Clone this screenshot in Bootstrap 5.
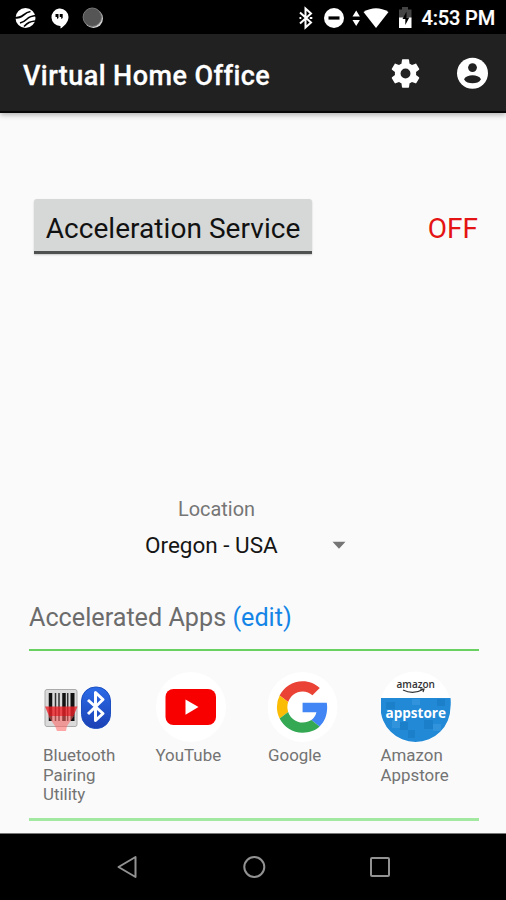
<!DOCTYPE html>
<html lang="en">
<head>
<meta charset="utf-8">
<meta name="viewport" content="width=device-width, initial-scale=1">
<title>Virtual Home Office</title>
<link href="https://cdn.jsdelivr.net/npm/bootstrap@5.3.0/dist/css/bootstrap.min.css" rel="stylesheet">
<style>
body{font-family:Roboto,"Liberation Sans",sans-serif;background:#fafafa;height:900px;overflow:hidden}
svg{display:block;flex:none}
.status-bar{height:34px;background:#000;padding:2px 11px 0 14px}
.status-time{font-size:20px;font-weight:500;line-height:34px;letter-spacing:-.15px;-webkit-text-stroke:.2px #fff}
.app-bar{height:79px;background:#212121;padding:0 17px 0 23px;border-bottom:2px solid #080808;box-shadow:0 2px 5px rgba(0,0,0,.28);z-index:1}
.app-title{font-size:27px;font-weight:500;line-height:32px;padding-top:7px;letter-spacing:.43px;-webkit-text-stroke:.3px #fff}
.service-row{margin-top:86px;padding:0 27px 0 34px}
.service-btn{width:278px;height:55px;background:#d6d8d7;color:#111;font-size:28px;line-height:46px;border:0;border-bottom:3px solid #4f5150;border-radius:3px 3px 0 0;padding:7px 0 0;box-shadow:0 1px 2px rgba(0,0,0,.2);letter-spacing:.05px}
.state{font-size:28px;color:#e51414;line-height:56px;margin-top:2px;margin-right:1px}
.location{margin-top:241px;color:#757575;font-size:19.900px;line-height:24px;padding-left:178px}
.picker{margin-top:9px;padding:0 160px 0 145px;font-size:22.5px;line-height:28px;color:#151515}
.apps{margin:0 27px 0 29px}
.apps-title{margin-top:42px;font-size:25.2px;line-height:34px;color:#6c6c6c;padding-bottom:14px;border-bottom:2px solid #68d162}
.apps-title a{color:#1485e6}
.app-grid{height:166.500px;padding-top:20px}
.app-item{padding-left:14px}
.app-label{font-size:16.900px;line-height:19.7px;color:#737373;margin-top:3px}
.end-line{height:3px;background:#a3e8a0}
.nav-bar{height:67px;background:#000;border-top:1px solid #777;padding:0 115px 0 116px}
</style>
</head>
<body class="d-flex flex-column">
<header class="status-bar d-flex align-items-center text-white">
  <svg width="92" height="24" viewBox="14 5.500 92 24">
    <circle cx="25.500" cy="17.500" r="10" fill="#fff"/>
    <path d="M14 17.500q6 0 9.500-3t7-3.500M20 22.500q4-1 7-4t9-3.500M24 26q3-3 5-4t6-1.500" stroke="#000" stroke-width="1.700" fill="none"/>
    <path d="M60 8a9 9 0 0 1 8.500 8.500c0 5-4.500 9.500-8 11.500V25.500H60a8.800 8.800 0 0 1-1-17.500z" fill="#fff"/>
    <path d="M55.500 13.500h3v4l-1.500 1v-2h-1.500zm4.200 0h3v4l-1.500 1v-2h-1.500z" fill="#000"/>
    <circle cx="93.500" cy="18" r="9.500" fill="#d2d2d2"/><circle cx="92.300" cy="16.700" r="9.200" fill="#555" stroke="#777" stroke-width="1"/>
  </svg>
  <svg class="ms-auto" width="116" height="26" viewBox="297 4.500 116 26">
    <path d="M300 12l11 10-5.500 5V8l5.500 5-11 10" fill="none" stroke="#fff" stroke-width="2"/>
    <path d="M299.500 17.500h1.800m8.500 0h2.500" stroke="#fff" stroke-width="2"/>
    <circle cx="334" cy="17.500" r="10" fill="#fff"/><rect x="328.500" y="15.900" width="11" height="3.200" fill="#000"/>
    <path d="M352.500 16l3.700-6 3.700 6zm0 3.500h7.400l-3.700 6z" fill="#fff"/>
    <path d="M363.500 11.500q12.500-7.500 25 0l-12.500 16z" fill="#fff"/>
    <path d="M399 9h3V6.500h6V9h3.500v9H399z" fill="#444"/><path d="M399 17h12.500v10.500H399z" fill="#fff"/>
    <path d="M406.500 11l-4 7.500h2.800v6l4-7.500h-2.800z" fill="#000"/>
  </svg>
  <span class="status-time ms-2">4:53 PM</span>
</header>
<nav class="app-bar d-flex align-items-center text-white">
  <span class="app-title">Virtual Home Office</span>
  <svg class="ms-auto" width="34" height="34" viewBox="0.350 -0.350 24 24" fill="#fff"><path d="M19.430 12.980c.04-.32.07-.64.07-.98s-.03-.66-.07-.98l2.110-1.650c.19-.15.24-.42.12-.64l-2-3.460c-.12-.22-.39-.3-.61-.22l-2.490 1c-.52-.4-1.080-.73-1.690-.98l-.38-2.650C14.460 2.180 14.250 2 14 2h-4c-.25 0-.46.18-.49.42l-.38 2.650c-.61.25-1.170.59-1.690.98l-2.490-1c-.23-.09-.49 0-.61.22l-2 3.460c-.13.22-.07.49.12.64l2.110 1.650c-.04.32-.07.65-.07.98s.03.66.07.98l-2.110 1.650c-.19.15-.24.42-.12.64l2 3.460c.12.22.39.3.61.22l2.490-1c.52.4 1.080.73 1.690.98l.38 2.650c.03.24.24.42.49.42h4c.25 0 .46-.18.49-.42l.38-2.650c.61-.25 1.170-.59 1.690-.98l2.490 1c.23.09.49 0 .61-.22l2-3.460c.12-.22.07-.49-.12-.64zM12 15.500a3.500 3.500 0 1 1 0-7 3.500 3.500 0 0 1 0 7z"/></svg>
  <svg class="account-icon" width="66" height="33" viewBox="-33 0 66 33"><g transform="translate(0 .8)"><circle cx="16.500" cy="16.500" r="15.500" fill="#fff"/><circle cx="16.500" cy="10.800" r="4.400" fill="#212121"/><path d="M8 22.500c1.500-3 5-4 8.500-4s7 1 8.500 4c-1.500 3-5 4-8.500 4s-7-1-8.500-4z" fill="#212121"/></g></svg>
</nav>
<main class="flex-grow-1">
  <div class="service-row d-flex justify-content-between">
    <button type="button" class="service-btn">Acceleration Service</button>
    <span class="state">OFF</span>
  </div>
  <div class="location">Location</div>
  <div class="picker d-flex justify-content-between align-items-center">
    <span>Oregon - USA</span>
    <svg width="14" height="8" viewBox="0 0 14 8"><path d="M.5 .8h13L7 7.800z" fill="#757575"/></svg>
  </div>
  <section class="apps">
    <div class="apps-title"><span class="apps-name">Accelerated Apps</span> <a href="#" class="text-decoration-none">(edit)</a></div>
    <div class="row g-0 app-grid">
      <div class="col-3 app-item">
        <svg width="72" height="72" viewBox="43 671 72 72">
          <defs><linearGradient id="bt" x1="0" y1="0" x2="0" y2="1"><stop offset="0" stop-color="#2b6be8"/><stop offset="1" stop-color="#1c41b4"/></linearGradient></defs>
          <rect x="45" y="689.500" width="32" height="37" rx="2" fill="#dadada" stroke="#aaa"/>
          <path d="M50.500 693v28M64 693v28" stroke="#111" stroke-width="3.500"/><path d="M55.500 693v28M59 693v28M67.700 693v28" stroke="#333" stroke-width="1.500"/><path d="M72.500 693v28" stroke="#111" stroke-width="4"/>
          <path d="M45 706.500h32.500l-4 9.500H49z" fill="#ec2228" opacity=".8"/><path d="M48 716h26l-7 10-1 5h-9l-2-5z" fill="#ff6262" opacity=".55"/>
          <rect x="81.500" y="687" width="29" height="41.500" rx="14" fill="url(#bt)" stroke="#1c4fc0"/>
          <path d="M88 700l15 13.500-7.500 7v-28l7.500 7L88 714" fill="none" stroke="#fff" stroke-width="3" stroke-linejoin="round"/>
        </svg>
        <div class="app-label">Bluetooth<br>Pairing<br>Utility</div>
      </div>
      <div class="col-3 app-item">
        <svg width="72" height="72" viewBox="155.500 671 72 72"><circle cx="190.500" cy="707" r="35" fill="#fff"/><rect x="165" y="689" width="50.500" height="36" rx="8" fill="#f80000"/><path d="M185 699.500l13 7.500-13 7.700z" fill="#fff"/></svg>
        <div class="app-label">YouTube</div>
      </div>
      <div class="col-3 app-item">
        <svg width="72" height="72" viewBox="268 671 72 72"><circle cx="302.500" cy="707" r="35" fill="#fff"/>
          <g transform="translate(276.900 681.300) scale(1.070)"><path fill="#ea4335" d="M24 9.500c3.540 0 6.710 1.220 9.210 3.600l6.850-6.850C35.900 2.380 30.470 0 24 0 14.620 0 6.510 5.380 2.560 13.220l7.980 6.190C12.430 13.720 17.740 9.500 24 9.500z"/><path fill="#4285f4" d="M46.980 24.550c0-1.570-.15-3.090-.38-4.550H24v9.020h12.940c-.58 2.960-2.260 5.480-4.780 7.180l7.730 6c4.510-4.180 7.090-10.360 7.090-17.650z"/><path fill="#fbbc05" d="M10.530 28.590A14.500 14.500 0 0 1 9.770 24c0-1.600.27-3.140.76-4.590l-7.980-6.190A23.900 23.900 0 0 0 0 24c0 3.880.92 7.540 2.560 10.780z"/><path fill="#34a853" d="M24 48c6.480 0 11.930-2.130 15.890-5.810l-7.730-6c-2.150 1.450-4.920 2.300-8.160 2.300-6.260 0-11.570-4.220-13.470-9.910l-7.980 6.190C6.510 42.620 14.620 48 24 48z"/></g>
        </svg>
        <div class="app-label">Google</div>
      </div>
      <div class="col-3 app-item">
        <svg width="72" height="72" viewBox="381 671 72 72"><circle cx="415.500" cy="707" r="35.500" fill="#fff"/><path d="M380.500 698h70a35.200 35.500 0 0 1 0 9a35 35 0 0 1-70 0z" fill="#2189d6"/>
          <path d="M400 722h8v8h-8zM408 730h7v8h-7zM424 720h9v9h-9zM386 702h9v7h-9zM437 699h8v7h-8z" fill="#1b7fca"/><path d="M392 720h8v8h-8zM433 724h8v7h-8zM412 699h8v6h-8z" fill="#3093dc"/>
          <text x="396.500" y="688" font-family="Open Sans,sans-serif" font-size="11.500" font-weight="600" fill="#333" textLength="38.500" lengthAdjust="spacingAndGlyphs">amazon</text>
          <path d="M403 690q10 5 20-.5m-3-.5h4l-1 3" fill="none" stroke="#333" stroke-width="1.200"/>
          <text x="385.500" y="717.500" font-family="Open Sans,sans-serif" font-size="14.500" font-weight="700" fill="#fff" textLength="60.500" lengthAdjust="spacingAndGlyphs">appstore</text>
        </svg>
        <div class="app-label">Amazon<br>Appstore</div>
      </div>
    </div>
    <div class="end-line"></div>
  </section>
</main>
<footer class="nav-bar d-flex justify-content-between align-items-center">
  <svg width="24" height="24" viewBox="0 0 24 24" fill="none" stroke="#929292" stroke-width="2" stroke-linejoin="round"><path d="M19.500 2v20L2.500 12z"/></svg>
  <svg width="24" height="24" viewBox="0 0 24 24" fill="none" stroke="#929292" stroke-width="2"><circle cx="12.300" cy="12" r="10"/></svg>
  <svg width="24" height="24" viewBox="0 0 24 24" fill="none" stroke="#929292" stroke-width="2"><rect x="4" y="3" width="18" height="18" rx="1"/></svg>
</footer>
<script src="https://cdn.jsdelivr.net/npm/bootstrap@5.3.0/dist/js/bootstrap.bundle.min.js"></script>
</body>
</html>
